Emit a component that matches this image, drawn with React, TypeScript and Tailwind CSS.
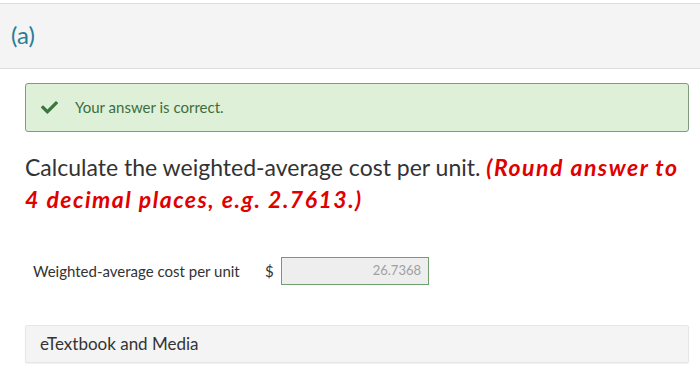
import React from 'react';

function Check() {
  return (
    <svg viewBox="0 0 512 512" className="w-[17px] h-[17px] fill-[#3c763d]">
      <path d="M173.898 439.404l-166.4-166.4c-9.997-9.997-9.997-26.206 0-36.204l36.203-36.204c9.997-9.998 26.207-9.998 36.204 0L192 312.69 432.095 72.596c9.997-9.997 26.207-9.997 36.204 0l36.203 36.204c9.997 9.997 9.997 26.206 0 36.204l-294.4 294.401c-9.998 9.997-26.207 9.997-36.204-.001z" />
    </svg>
  );
}

export default function App() {
  return (
    <div className="w-[700px] h-[383px] bg-white overflow-hidden font-['Lato','Open_Sans',sans-serif] text-[#333]">
      <div className="mt-[3px] h-[66px] border-y border-[#dedede] bg-[#f4f4f4] flex items-center pl-[11px]">
        <span className="text-[24px] text-[#2b7c97] leading-none pb-[2px]">(a)</span>
      </div>

      <div className="pl-[25px] pr-[11px]">
        <div className="mt-[14px] h-[49px] border border-[#7f9c7f] rounded-[3px] bg-[#dff0d8] flex items-center pl-[15px] gap-[17px]">
          <Check />
          <span className="text-[15px] text-[#3c6e3d]">Your answer is correct.</span>
        </div>

        <p className="mt-[19px] text-[23px] leading-[32px] text-[#333]">
          Calculate the weighted-average cost per unit.{' '}
          <span className="font-bold italic text-[#e00000] tracking-[1.5px]">(Round answer to 4 decimal places, e.g. 2.7613.)</span>
        </p>

        <div className="mt-[42px] flex items-center pl-[8px]">
          <span className="text-[15px] w-[232px]">Weighted-average cost per unit</span>
          <span className="text-[15px] w-[16px]">$</span>
          <div className="w-[148px] h-[28px] border border-[#6f9e6f] bg-[#eeeeee] flex items-center justify-end pr-[7px]">
            <span className="text-[13px] text-[#a0a0a0]">26.7368</span>
          </div>
        </div>

        <div className="mt-[40px] h-[38px] border border-[#e6e6e6] bg-[#f4f4f4] rounded-[2px] shadow-[0_1px_1px_rgba(0,0,0,0.06)] flex items-center pl-[14px]">
          <span className="text-[17px] text-[#333]">eTextbook and Media</span>
        </div>
      </div>
    </div>
  );
}
